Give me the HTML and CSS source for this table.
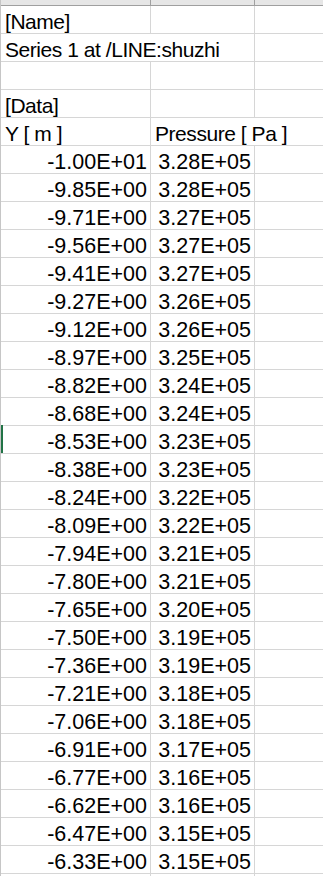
FILE: index.html
```html
<!DOCTYPE html>
<html>
<head>
<meta charset="utf-8">
<link rel="stylesheet" href="styles.css">
</head>
<body>
<div class="sheet">
  <div class="colhead">
    <div class="hc hc-a"></div>
    <div class="hc hc-b"></div>
    <div class="hc hc-c"></div>
  </div>
  <div class="row"><div class="cell a txt">[Name]</div><div class="cell b"></div><div class="cell c"></div></div>
  <div class="row"><div class="cell a txt over">Series 1 at /LINE:shuzhi</div><div class="cell b"></div><div class="cell c"></div></div>
  <div class="row"><div class="cell a"></div><div class="cell b"></div><div class="cell c"></div></div>
  <div class="row"><div class="cell a txt">[Data]</div><div class="cell b"></div><div class="cell c"></div></div>
  <div class="row"><div class="cell a txt">Y [ m ]</div><div class="cell b txt over">Pressure [ Pa ]</div><div class="cell c"></div></div>
  <div class="row"><div class="cell a num">-1.00E+01</div><div class="cell b num">3.28E+05</div><div class="cell c"></div></div>
  <div class="row"><div class="cell a num">-9.85E+00</div><div class="cell b num">3.28E+05</div><div class="cell c"></div></div>
  <div class="row"><div class="cell a num">-9.71E+00</div><div class="cell b num">3.27E+05</div><div class="cell c"></div></div>
  <div class="row"><div class="cell a num">-9.56E+00</div><div class="cell b num">3.27E+05</div><div class="cell c"></div></div>
  <div class="row"><div class="cell a num">-9.41E+00</div><div class="cell b num">3.27E+05</div><div class="cell c"></div></div>
  <div class="row"><div class="cell a num">-9.27E+00</div><div class="cell b num">3.26E+05</div><div class="cell c"></div></div>
  <div class="row"><div class="cell a num">-9.12E+00</div><div class="cell b num">3.26E+05</div><div class="cell c"></div></div>
  <div class="row"><div class="cell a num">-8.97E+00</div><div class="cell b num">3.25E+05</div><div class="cell c"></div></div>
  <div class="row"><div class="cell a num">-8.82E+00</div><div class="cell b num">3.24E+05</div><div class="cell c"></div></div>
  <div class="row"><div class="cell a num">-8.68E+00</div><div class="cell b num">3.24E+05</div><div class="cell c"></div></div>
  <div class="row active"><div class="cell a num">-8.53E+00</div><div class="cell b num">3.23E+05</div><div class="cell c"></div></div>
  <div class="row"><div class="cell a num">-8.38E+00</div><div class="cell b num">3.23E+05</div><div class="cell c"></div></div>
  <div class="row"><div class="cell a num">-8.24E+00</div><div class="cell b num">3.22E+05</div><div class="cell c"></div></div>
  <div class="row"><div class="cell a num">-8.09E+00</div><div class="cell b num">3.22E+05</div><div class="cell c"></div></div>
  <div class="row"><div class="cell a num">-7.94E+00</div><div class="cell b num">3.21E+05</div><div class="cell c"></div></div>
  <div class="row"><div class="cell a num">-7.80E+00</div><div class="cell b num">3.21E+05</div><div class="cell c"></div></div>
  <div class="row"><div class="cell a num">-7.65E+00</div><div class="cell b num">3.20E+05</div><div class="cell c"></div></div>
  <div class="row"><div class="cell a num">-7.50E+00</div><div class="cell b num">3.19E+05</div><div class="cell c"></div></div>
  <div class="row"><div class="cell a num">-7.36E+00</div><div class="cell b num">3.19E+05</div><div class="cell c"></div></div>
  <div class="row"><div class="cell a num">-7.21E+00</div><div class="cell b num">3.18E+05</div><div class="cell c"></div></div>
  <div class="row"><div class="cell a num">-7.06E+00</div><div class="cell b num">3.18E+05</div><div class="cell c"></div></div>
  <div class="row"><div class="cell a num">-6.91E+00</div><div class="cell b num">3.17E+05</div><div class="cell c"></div></div>
  <div class="row"><div class="cell a num">-6.77E+00</div><div class="cell b num">3.16E+05</div><div class="cell c"></div></div>
  <div class="row"><div class="cell a num">-6.62E+00</div><div class="cell b num">3.16E+05</div><div class="cell c"></div></div>
  <div class="row"><div class="cell a num">-6.47E+00</div><div class="cell b num">3.15E+05</div><div class="cell c"></div></div>
  <div class="row"><div class="cell a num">-6.33E+00</div><div class="cell b num">3.15E+05</div><div class="cell c"></div></div>
  <div class="row"><div class="cell a"></div><div class="cell b"></div><div class="cell c"></div></div>
</div>
</body>
</html>
```

FILE: styles.css
```css
html, body {
  margin: 0;
  padding: 0;
  background: #ffffff;
  overflow: hidden;
}

.sheet {
  width: 323px;
  height: 876px;
  overflow: hidden;
  border-left: 1px solid #c6c6c6;
  box-sizing: border-box;
  font-family: "Liberation Sans", Arial, sans-serif;
  font-size: 21px;
  color: #000000;
}

.colhead {
  display: grid;
  grid-template-columns: 150px 104px 104px;
  height: 5px;
  background: #e6e6e6;
  border-bottom: 1px solid #9f9f9f;
}

.hc {
  border-right: 1px solid #a0a0a0;
}

.row {
  display: grid;
  grid-template-columns: 150px 104px 104px;
  height: 28px;
  box-sizing: border-box;
  border-bottom: 1px solid #d6d6d6;
  position: relative;
}

.row.active::before {
  content: "";
  position: absolute;
  left: -1px;
  top: -1px;
  width: 3px;
  height: 28px;
  background: #217346;
}

.cell {
  border-right: 1px solid #d6d6d6;
  box-sizing: border-box;
  white-space: nowrap;
  line-height: 22px;
  display: flex;
  align-items: flex-end;
  padding-left: 4px;
  padding-right: 3px;
  overflow: visible;
  position: relative;
  z-index: 1;
}

.cell.txt {
  letter-spacing: -0.45px;
}

.cell.over {
  border-right-color: transparent;
}

.cell.num {
  justify-content: flex-end;
  font-size: 21.5px;
}

.cell.c {
  border-right: none;
}
```
